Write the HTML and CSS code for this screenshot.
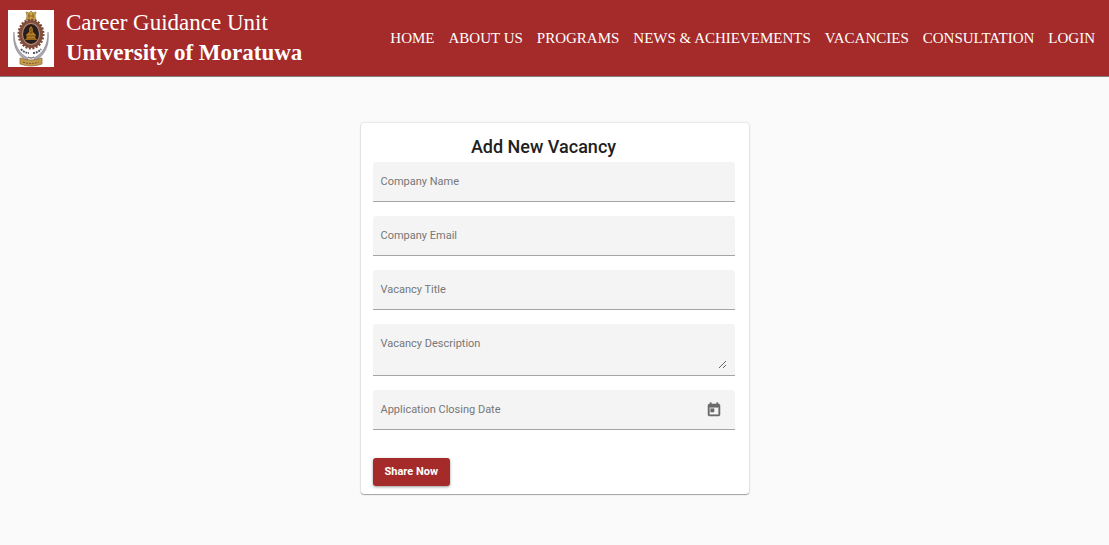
FILE: index.html
```html
<!DOCTYPE html>
<html lang="en">
<head>
<meta charset="utf-8">
<meta name="viewport" content="width=device-width, initial-scale=1">
<title>Career Guidance Unit</title>
<link rel="stylesheet" href="styles.css">
</head>
<body>
<header class="site-header">
  <a class="brand" href="#">
    <svg class="crest" viewBox="0 0 46 57" aria-hidden="true">
      <rect width="46" height="57" fill="#fff"/>
      <path d="M6 22C6 36 12 44 20 48L19 51C10 46 4 36 6 22ZM40 22C40 36 34 44 26 48L27 51C36 46 42 36 40 22Z" fill="#a9a8ae" stroke="#77737c" stroke-width=".5"/>
      <path d="M18 2l3 1 2-2 2 2 3-1-1 4 1 4H18l1-4Z" fill="#d0a548" stroke="#8b6a2c" stroke-width=".6"/>
      <path d="M20 6h6M21 3v5M25 3v5" stroke="#7d5926" stroke-width=".8"/>
      <ellipse cx="23" cy="24" rx="12" ry="14" fill="#82523f"/>
      <ellipse cx="23" cy="24" rx="12" ry="14" fill="none" stroke="#7c4a38" stroke-width="3" stroke-dasharray="2 1.4"/>
      <ellipse cx="23" cy="24" rx="9" ry="11" fill="#b58a78"/>
      <ellipse cx="23" cy="24" rx="8" ry="10" fill="#271d1b"/>
      <path d="M23 16l2 3v3l3 3-1 2 2 3H17l2-3-1-2 3-3v-3Z" fill="#b87d22"/>
      <path d="M19 26h8M18 29h10M22 19h2v4h-2Z" stroke="#593918" stroke-width=".7" fill="none"/>
      <path d="M13 39q3 4 8 4M25 43q5 0 8-4" fill="none" stroke="#5c5c66" stroke-width="2" stroke-dasharray="2 .8"/>
      <path d="M20 47q3 2 6 0" fill="none" stroke="#77737c" stroke-width="1.500"/>
      <path d="M12 48q11 4 22 0v6q-11 4-22 0Z" fill="#c49b4f" stroke="#876733" stroke-width=".7"/>
      <path d="M15 52q8 3 16 0" fill="none" stroke="#775a2c" stroke-width="1" stroke-dasharray="2 1"/>
    </svg>
    <span class="brand-text">
      <span>Career Guidance Unit</span>
      <strong>University of Moratuwa</strong>
    </span>
  </a>
  <nav class="main-nav">
    <a href="#">HOME</a>
    <a href="#">ABOUT US</a>
    <a href="#">PROGRAMS</a>
    <a href="#">NEWS &amp; ACHIEVEMENTS</a>
    <a href="#">VACANCIES</a>
    <a href="#">CONSULTATION</a>
    <a href="#">LOGIN</a>
  </nav>
</header>
<main class="page">
  <form class="card">
    <h1 class="card-title">Add New Vacancy</h1>
    <div class="fields">
      <div class="field">
        <label for="company-name">Company Name</label>
        <input id="company-name" type="text">
      </div>
      <div class="field">
        <label for="company-email">Company Email</label>
        <input id="company-email" type="email">
      </div>
      <div class="field">
        <label for="vacancy-title">Vacancy Title</label>
        <input id="vacancy-title" type="text">
      </div>
      <div class="field">
        <label for="vacancy-description">Vacancy Description</label>
        <textarea id="vacancy-description" rows="2"></textarea>
      </div>
      <div class="field field-date">
        <label for="closing-date">Application Closing Date</label>
        <input id="closing-date" type="text">
        <button class="calendar" type="button" aria-label="Open calendar">
          <svg viewBox="0 0 24 24" aria-hidden="true"><path fill="currentColor" stroke="currentColor" stroke-width=".8" d="M19 3h-1V1h-2v2H8V1H6v2H5c-1.100 0-2 .9-2 2v14c0 1.100.9 2 2 2h14c1.100 0 2-.9 2-2V5c0-1.100-.9-2-2-2zm0 16H5V8h14v11zM7 10h5v5H7z"/></svg>
        </button>
      </div>
    </div>
    <button class="submit" type="submit">Share Now</button>
  </form>
</main>
</body>
</html>
```
FILE: styles.css
```css
* {
  box-sizing: border-box;
}

body {
  margin: 0;
  background: #fafafa;
  font-family: Roboto, "Liberation Sans", sans-serif;
}

.site-header {
  display: flex;
  justify-content: space-between;
  align-items: center;
  padding: 8px 14px 8px 8px;
  background: #a52a2a;
  border-bottom: 1px solid #858080;
  font-family: "Liberation Serif", "Times New Roman", serif;
}

.brand {
  display: flex;
  align-items: center;
  gap: 12px;
  color: #fff;
  text-decoration: none;
}

.crest {
  width: 46px;
  height: 57px;
}

.brand-text {
  display: flex;
  flex-direction: column;
  font-size: 23px;
  line-height: 30px;
  white-space: nowrap;
}

.main-nav {
  display: flex;
  gap: 14px;
}

.main-nav a {
  color: #fff;
  font-size: 15px;
  line-height: 20px;
  text-decoration: none;
  white-space: nowrap;
}

.page {
  display: flex;
  justify-content: center;
  padding: 46px 16px;
}

.card {
  width: 100%;
  max-width: 388px;
  padding: 12px 14px 8px 12px;
  background: #fff;
  border-radius: 3px;
  box-shadow: 0 1px 1px rgba(0, 0, 0, 0.3), 0 0 2px rgba(0, 0, 0, 0.24);
}

.card-title {
  margin: 0;
  padding-right: 20px;
  color: #212121;
  font-size: 18px;
  font-weight: 500;
  line-height: 24px;
  text-align: center;
}

.fields {
  display: grid;
  gap: 14px;
  padding: 3px 0 28px;
}

.field {
  display: grid;
  padding: 0 8px;
  background: #f4f4f4;
  border-bottom: 1px solid #a5a5a5;
  border-radius: 3px 3px 0 0;
}

.field label,
.field input,
.field textarea {
  grid-column: 1;
  grid-row: 1;
  font-size: 11px;
  line-height: 16px;
}

.field label {
  align-self: start;
  padding-top: 12px;
  color: #777;
  pointer-events: none;
}

.field input,
.field textarea {
  width: 100%;
  padding: 0;
  border: 0;
  outline: 0;
  background: transparent;
  color: #212121;
  font-family: inherit;
}

.field input {
  height: 39px;
}

.field textarea {
  height: 28px;
  margin: 17px 0 6px;
  resize: vertical;
}

.field-date {
  grid-template-columns: 1fr 26px;
}

.calendar {
  display: grid;
  place-items: center;
  padding: 0;
  border: 0;
  background: transparent;
  color: #6b6b6b;
}

.calendar svg {
  width: 16px;
  height: 16px;
}

.submit {
  display: block;
  padding: 6px 12px;
  border: 0;
  border-radius: 3px;
  background: #a52a2a;
  box-shadow: 0 1px 3px rgba(0, 0, 0, 0.4);
  color: #fff;
  font-family: inherit;
  font-size: 11px;
  font-weight: 700;
  line-height: 16px;
}
```
